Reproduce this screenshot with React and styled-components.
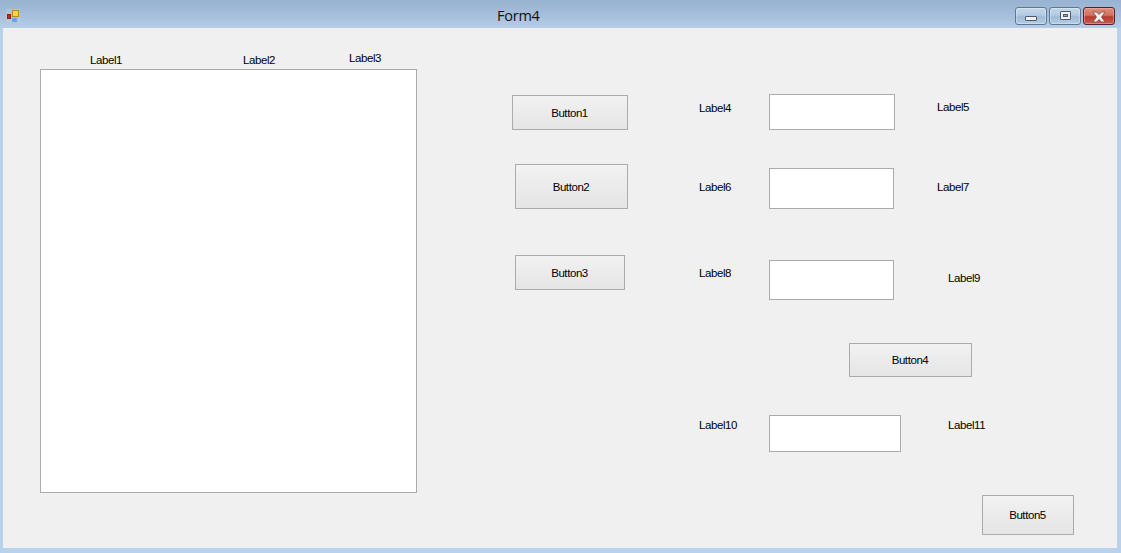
import React from "react";
import styled, { createGlobalStyle } from "styled-components";

const Global = createGlobalStyle`
  html, body { margin: 0; padding: 0; background: #b9d1ea; }
  body { font-family: "Liberation Sans", Arial, sans-serif; overflow: hidden; }
`;

const Win = styled.div`
  width: 1121px;
  height: 553px;
  display: flex;
  flex-direction: column;
  background: #b9d1ea;
`;

const TitleBar = styled.div`
  height: 28px;
  flex: none;
  display: flex;
  align-items: flex-start;
  position: relative;
  background: linear-gradient(180deg, #98b3d1 0%, #a2bcd9 45%, #b5cde7 100%);
`;

const AppIcon = styled.svg`
  width: 16px;
  height: 16px;
  margin: 8px 0 0 5px;
  flex: none;
`;

const Title = styled.div`
  position: absolute;
  left: 497px;
  top: 6px;
  font: 14.5px/20px "Open Sans", "Noto Sans", sans-serif;
  color: #111;
  letter-spacing: -0.25px;
`;

const Controls = styled.div`
  margin: 7px 6px 0 auto;
  display: flex;
  gap: 2px;
`;

const CaptionBtn = styled.div`
  width: 32px;
  height: 18px;
  box-sizing: border-box;
  border-radius: 3px;
  border: 1px solid ${(p) => (p.$close ? "#5a1f2e" : "#5f7890")};
  box-shadow: inset 0 0 0 1px ${(p) => (p.$close ? "rgba(255,200,190,.4)" : "rgba(255,255,255,.3)")};
  background: ${(p) =>
    p.$close
      ? "linear-gradient(180deg,#dc8f7f 0%,#d2705f 45%,#b53a2c 55%,#c9604e 100%)"
      : "linear-gradient(180deg,#c5d8ea 0%,#b3cbe2 45%,#9fbbd6 55%,#b4cde4 100%)"};
  display: flex;
  align-items: center;
  justify-content: center;
`;

const MinGlyph = styled.div`
  width: 12px;
  height: 5px;
  margin-top: 4px;
  box-sizing: border-box;
  background: #eef0f3;
  border: 1px solid #4f5a68;
  border-radius: 1px;
`;

const MaxGlyph = styled.div`
  width: 11px;
  height: 9px;
  margin-top: -1px;
  box-sizing: border-box;
  background: #eef0f3;
  border: 1px solid #4f5a68;
  border-radius: 1px;
  display: flex;
  align-items: center;
  justify-content: center;
  &::after {
    content: "";
    width: 5px;
    height: 3px;
    box-sizing: border-box;
    background: #8fa8c2;
    border: 1px solid #4f5a68;
  }
`;

const CloseGlyph = styled.svg`
  width: 14px;
  height: 12px;
  margin-top: 1px;
`;

const Client = styled.div`
  margin: 0 4px 5px 3px;
  flex: 1;
  background: #f0f0f0;
  display: flex;
  align-items: flex-start;
  font-size: 11.5px;
  letter-spacing: -0.42px;
  line-height: 13px;
  color: #000;
`;

const LeftCol = styled.div`
  width: 377px;
  margin: 24px 0 0 37px;
  flex: none;
`;

const LabelRow = styled.div`
  height: 17px;
  display: flex;
  align-items: flex-start;
`;

const Label = styled.span`
  display: block;
  flex: none;
  width: ${(p) => p.$w || "auto"};
  margin: ${(p) => p.$m || "0"};
`;

const ListBox = styled.div`
  height: 424px;
  box-sizing: border-box;
  background: #fff;
  border: 1px solid #ababab;
`;

const MidCol = styled.div`
  width: 187px;
  flex: none;
  margin: 67px 0 0 95px;
  display: flex;
  flex-direction: column;
`;

const Button = styled.div`
  width: ${(p) => p.$w}px;
  height: ${(p) => p.$h}px;
  margin: ${(p) => p.$m || "0"};
  padding: 1px 1px 0 0;
  box-sizing: border-box;
  flex: none;
  border: 1px solid #ababab;
  background: linear-gradient(180deg, #f2f2f2 0%, #ebebeb 50%, #e5e5e5 100%);
  display: flex;
  align-items: center;
  justify-content: center;
  color: #000;
`;

const RightCol = styled.div`
  flex: none;
  width: 400px;
  margin-top: 66px;
  display: flex;
  flex-direction: column;
`;

const FieldRow = styled.div`
  height: ${(p) => p.$h}px;
  margin-top: ${(p) => p.$top || 0}px;
  flex: none;
  display: flex;
  align-items: flex-start;
`;

const TextBox = styled.div`
  width: ${(p) => p.$w}px;
  height: ${(p) => p.$h}px;
  box-sizing: border-box;
  flex: none;
  background: #fff;
  border: 1px solid #ababab;
`;

const Field = ({ h, top, boxW, boxH, lT, rT, rL, left, right }) => (
  <FieldRow $h={h} $top={top}>
    <Label $w="70px" $m={`${lT}px 0 0 0`}>{left}</Label>
    <TextBox $w={boxW} $h={boxH} />
    <Label $m={`${rT}px 0 0 ${rL}px`}>{right}</Label>
  </FieldRow>
);

export default function App() {
  return (
    <Win>
      <Global />
      <TitleBar>
        <AppIcon viewBox="0 0 16 16">
          <rect x="1" y="1" width="14" height="14" fill="#c6ccd4" opacity=".5" />
          <rect x="2.500" y="6.500" width="3" height="4" fill="#c8281c" stroke="#8c1c14" />
          <rect x="7.500" y="2.500" width="6" height="6" fill="#fbd24a" stroke="#b98a18" />
          <rect x="7" y="10" width="5" height="4" fill="#62a4e8" stroke="#8fb6de" strokeWidth=".5" />
        </AppIcon>
        <Title>Form4</Title>
        <Controls>
          <CaptionBtn><MinGlyph /></CaptionBtn>
          <CaptionBtn><MaxGlyph /></CaptionBtn>
          <CaptionBtn $close>
            <CloseGlyph viewBox="0 0 14 12">
              <path d="M1 1h3.500L7 3.500 9.500 1H13L9.500 6 13 11H9.500L7 8.500 4.500 11H1l3.500-5z" fill="#f1f1f1" stroke="#7a4040" strokeWidth=".7" />
            </CloseGlyph>
          </CaptionBtn>
        </Controls>
      </TitleBar>
      <Client>
        <LeftCol>
          <LabelRow>
            <Label $w="153px" $m="2px 0 0 50px">Label1</Label>
            <Label $w="106px" $m="2px 0 0 0">Label2</Label>
            <Label>Label3</Label>
          </LabelRow>
          <ListBox />
        </LeftCol>
        <MidCol>
          <Button $w={116} $h={35}>Button1</Button>
          <Button $w={113} $h={45} $m="34px 0 0 3px">Button2</Button>
          <Button $w={110} $h={35} $m="46px 0 0 3px">Button3</Button>
        </MidCol>
        <RightCol>
          <Field h={36} boxW={126} boxH={36} lT={8} rT={7} rL={42} left="Label4" right="Label5" />
          <Field h={41} top={38} boxW={125} boxH={41} lT={13} rT={13} rL={43} left="Label6" right="Label7" />
          <Field h={40} top={51} boxW={125} boxH={40} lT={7} rT={12} rL={54} left="Label8" right="Label9" />
          <Button $w={123} $h={34} $m="43px 0 0 150px">Button4</Button>
          <Field h={37} top={38} boxW={132} boxH={37} lT={4} rT={4} rL={47} left="Label10" right="Label11" />
          <Button $w={92} $h={40} $m="43px 0 0 283px">Button5</Button>
        </RightCol>
      </Client>
    </Win>
  );
}
